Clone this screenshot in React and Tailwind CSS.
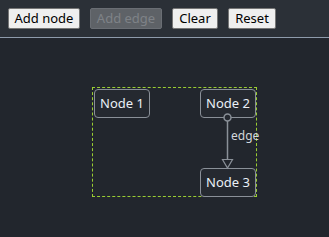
import React from "react";

const font = { fontFamily: '"Noto Sans", "Open Sans", sans-serif' };

const Node = ({ label, className }) => (
  <div
    className={`absolute flex h-[29px] w-[56px] items-center justify-center rounded-[4px] border border-[#8a9098] bg-[#252930] text-[13px] text-[#eaf0f7] ${className}`}
  >
    {label}
  </div>
);

export default function App() {
  return (
    <div className="flex h-[237px] w-[329px] flex-col bg-[#22262d]" style={font}>
      {/* Toolbar */}
      <div className="flex h-[37px] items-center gap-[10px] bg-[#2b3037] pl-[8px]">
        <button className="h-[21px] w-[72px] rounded-[2px] border border-[#767676] bg-[#efefef] text-[13px] leading-none text-black">
          Add node
        </button>
        <button
          disabled
          className="h-[21px] w-[72px] rounded-[2px] border border-[#6a6e74] bg-[#5e6267] text-[13px] leading-none text-[#7e8287]"
        >
          Add edge
        </button>
        <button className="h-[21px] w-[46px] rounded-[2px] border border-[#767676] bg-[#efefef] text-[13px] leading-none text-black">
          Clear
        </button>
        <button className="h-[21px] w-[48px] rounded-[2px] border border-[#767676] bg-[#efefef] text-[13px] leading-none text-black">
          Reset
        </button>
      </div>
      <div className="h-px bg-[#8e9bab]" />

      {/* Canvas */}
      <div className="relative flex-1">
        <div className="absolute left-[92px] top-[49px] h-[110px] w-[165px] border border-dashed border-[#9acd32]" />
        <Node label="Node 1" className="left-[94px] top-[51px]" />
        <Node label="Node 2" className="left-[200px] top-[51px]" />
        <Node label="Node 3" className="left-[200px] top-[130px]" />
        <svg className="absolute left-0 top-0" width="329" height="199">
          <line x1="227.5" y1="83" x2="227.5" y2="129" stroke="#8a9098" strokeWidth="1.5" />
          <circle cx="227.5" cy="79.5" r="3.5" fill="#252930" stroke="#8a9098" strokeWidth="1.5" />
          <path d="M222.5 121.5 L232.5 121.5 L227.5 130 Z" fill="#22262d" stroke="#8a9098" strokeWidth="1.2" />
        </svg>
        <span className="absolute left-[231px] top-[92px] text-[12px] leading-none text-[#d3d7dc]">
          edge
        </span>
      </div>
    </div>
  );
}
